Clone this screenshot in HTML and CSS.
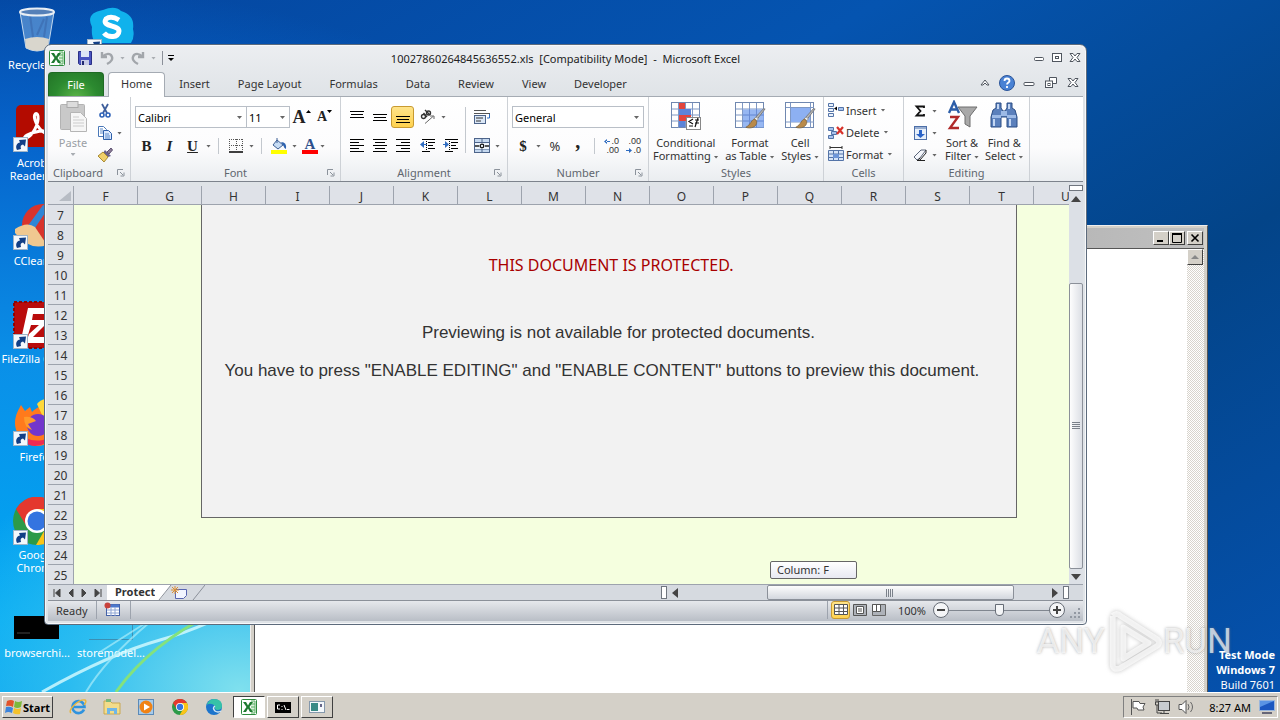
FILE: index.html
```html
<!DOCTYPE html>
<html lang="en">
<head>
  <meta charset="UTF-8">
  <meta name="viewport" content="width=device-width, initial-scale=1.0">
  <title>10027860264845636552.xls - Microsoft Excel</title>
  <link rel="stylesheet" href="styles.css">
</head>

<body>
  <!-- shared icons -->
  <svg class="defs" width="0" height="0">
    <symbol id="shortcut" viewBox="0 0 15 15">
      <rect x=".5" y=".5" width="14" height="14" fill="#f4f8fc" stroke="#9fb4c8"/>
      <path d="M4 13C2 9 4 6 7 5.500L6 3l7-.5-1 7-2-2C8 8 7 9 8 12z" fill="#123f86"/>
    </symbol>
    <symbol id="launcher" viewBox="0 0 8 8">
      <path d="M.5 6V.5H6M3 3l3 3M7 3.500V7H3.500" fill="none" stroke="#8b929b"/>
    </symbol>
    <symbol id="excel" viewBox="0 0 16 16">
      <rect x=".5" y=".5" width="15" height="15" rx="1" fill="#fff" stroke="#2c8a3c"/>
      <path d="M10 2h4v12h-4M10 5h4M10 8h4M10 11h4" fill="#d9f0d9" stroke="#5db069"/>
      <path d="M2 3h3l2 3.500L9 3h3L8.500 8 12 13H9L7 9.500 5 13H2l3.500-5z" fill="#1e7a30"/>
    </symbol>
    <symbol id="grid-big" viewBox="0 0 32 32">
      <rect x="1.500" y="2.500" width="28" height="25" fill="#fff" stroke="#7088b0"/>
      <path d="M2 9h28M2 15h28M2 21h28M8.500 3v25M15.500 3v25M22.500 3v25" stroke="#7f98c4"/>
    </symbol>
    <symbol id="brush" viewBox="0 0 24 24">
      <path d="M23 1L13 14l-2-2L21 1z" fill="#b8b8b8" stroke="#777"/>
      <path d="M13 14l-2-2 2-2 3 2z" fill="#eee" stroke="#888" stroke-width=".6"/>
      <path d="M12 12c-4 0-4 6-10 9 5 2 12 0 12-6z" fill="#b98a4a" stroke="#6d5a3c" stroke-width=".7"/>
    </symbol>
    <symbol id="chrome" viewBox="0 0 48 48">
      <circle cx="24" cy="24" r="24" fill="#2c9a48"/>
      <path d="M3 12A24 24 0 0 1 45 12L24 14 14 30z" fill="#e4382e"/>
      <path d="M45 12A24 24 0 0 1 23 48L34 29 24 12z" fill="#fbc417"/>
      <circle cx="24" cy="24" r="12" fill="#fff"/>
      <circle cx="24" cy="24" r="9.500" fill="#3474e0"/>
    </symbol>
  </svg>

  <svg class="wallpaper" viewBox="0 0 250 100" preserveAspectRatio="none">
    <path d="M42 100Q110 62 160 48T250 8" fill="none" stroke="#d7fbff" stroke-width="3" opacity=".8"/>
    <path d="M116 100Q150 52 215 20" fill="none" stroke="#84e27c" stroke-width="3"/>
    <path d="M86 100Q105 68 150 30M100 60L155 25" fill="none" stroke="#a9ecfa" stroke-width="2" opacity=".7"/>
  </svg>

  <main class="desktop">
    <a class="shortcut" href="#">
      <svg class="shortcut-icon" viewBox="0 0 48 48">
        <path d="M7 5l6 36q11 6 22 0l6-36z" fill="#7fb0e4" fill-opacity=".55" stroke="#c4d9ee"/>
        <path d="M12 32l1 9q11 6 22 0l1-9q-12-4-24 0z" fill="#d9d6cd"/>
        <path d="M17 8l3 22M31 12L24 28M34 10l-3 20" stroke="#3f73b8" stroke-width="2"/>
        <ellipse cx="24" cy="5" rx="17" ry="3.500" fill="#5580b8" stroke="#e8eef4" stroke-width="2"/>
      </svg>
      <span>Recycle Bin</span>
    </a>
    <a class="shortcut" href="#">
      <svg class="shortcut-icon" viewBox="0 0 48 48">
        <rect x="3" width="45" height="42" rx="5" fill="#b30b00"/>
        <path d="M12 33C20 32 26 18 25 11c-1-5-5-2-3 4 3 9 10 16 18 14 4-2-10-4-17-2-7 1-13 5-11 6z" fill="none" stroke="#fff" stroke-width="3"/>
        <use href="#shortcut" x="0" y="32" width="15" height="15"/>
      </svg>
      <span>Acrobat Reader DC</span>
    </a>
    <a class="shortcut" href="#">
      <svg class="shortcut-icon" viewBox="0 0 48 48">
        <circle cx="30" cy="22" r="21" fill="#d8342c"/>
        <path d="M14 24L30 2l6 2-16 24z" fill="#2f86d6"/>
        <path d="M2 26q12-8 20-2l12 18q-18 6-32-12z" fill="#f0c890"/>
        <use href="#shortcut" x="0" y="32" width="15" height="15"/>
      </svg>
      <span>CCleaner</span>
    </a>
    <a class="shortcut" href="#">
      <svg class="shortcut-icon" viewBox="0 0 48 48">
        <rect x="1" y="1" width="46" height="46" fill="#b90c0c" stroke="#8c0505" stroke-width="2" stroke-dasharray="3 2"/>
        <path d="M15 7h30l-2 6H20l-1 6h18L20 36h22v6H13l3-9 10-9h-8l-3 10H9z" fill="#fff"/>
        <use href="#shortcut" x="0" y="33" width="15" height="15"/>
      </svg>
      <span class="one-line">FileZilla Client</span>
    </a>
    <a class="shortcut" href="#">
      <svg class="shortcut-icon" viewBox="0 0 48 48">
        <path d="M2 24C2 16 6 10 8 6l4 6 5-4 2 5c4-5 10-4 12-12 10 6 16 16 15 27-2 12-12 19-22 19S2 37 2 24z" fill="#ff7a1c"/>
        <path d="M24 5q3-4 8-5 14 12 14 26L30 18z" fill="#ffd83a"/>
        <path d="M4 32q10 12 26 9l12-7q-8 13-20 13T4 32z" fill="#ee2a52"/>
        <circle cx="25" cy="26" r="11" fill="#7236cc"/>
        <path d="M11 18q8-1 12 4l-8 3 4 6q-8-2-8-13z" fill="#ff9a2a"/>
        <use href="#shortcut" x="0" y="32" width="15" height="15"/>
      </svg>
      <span>Firefox</span>
    </a>
    <a class="shortcut" href="#">
      <svg class="shortcut-icon" viewBox="0 0 48 48">
        <use href="#chrome" width="48" height="48"/>
        <use href="#shortcut" x="0" y="33" width="15" height="15"/>
      </svg>
      <span>Google Chrome</span>
    </a>
    <a class="shortcut" href="#">
      <svg class="shortcut-icon" viewBox="0 0 48 48">
        <rect x="1" y="21" width="45" height="23" fill="#000"/>
        <path d="M4 38h13" stroke="#444"/>
      </svg>
      <span>browserchi...</span>
    </a>
    <a class="shortcut" href="#" aria-label="Skype">
      <svg class="shortcut-icon" viewBox="0 0 48 48">
        <path d="M16 3Q28-2 34 4q14 4 12 18 2 8-2 14H8Q4 30 5 20-2 6 16 3z" fill="#10b2ec"/>
        <path d="M32 13q-8-5-13-1c-5 8 13 6 13 12 0 7-11 7-15 2" fill="none" stroke="#fff" stroke-width="5"/>
        <use href="#shortcut" x="0" y="32" width="15" height="15"/>
      </svg>
    </a>
    <a class="shortcut last-row" href="#">
      <svg class="shortcut-icon" viewBox="0 0 48 48">
        <path d="M2 44.500h43.500V20" fill="none" stroke="#3a8fb4"/>
      </svg>
      <span>storemodel...</span>
    </a>
  </main>

  <p class="build-info"><b>Test Mode</b><b>Windows 7</b><span>Build 7601</span></p>

  <!-- text window at the back -->
  <section class="classic-window" aria-label="Text window">
    <header class="classic-title">
      <button class="classic-btn" aria-label="Minimize"><svg viewBox="0 0 12 10"><path d="M2 8h6" stroke="#000" stroke-width="2"/></svg></button>
      <button class="classic-btn" aria-label="Maximize"><svg viewBox="0 0 12 10"><path d="M2 1h8M1.500 1v8.500h9V1" fill="none" stroke="#000"/><path d="M1 1h10" stroke="#000" stroke-width="2"/></svg></button>
      <button class="classic-btn close" aria-label="Close"><svg viewBox="0 0 12 10"><path d="M2.500 1.500l7 7M9.500 1.500l-7 7" stroke="#000" stroke-width="1.600"/></svg></button>
    </header>
    <div class="classic-body">
      <div class="classic-page"></div>
      <div class="classic-scroll">
        <button class="classic-btn" aria-label="Scroll up"><svg viewBox="0 0 12 10"><path d="M2 7h8L6 3z" fill="#888"/></svg></button>
      </div>
    </div>
  </section>

  <section class="excel" aria-label="Microsoft Excel">
    <header class="titlebar">
      <div class="quick-access">
        <svg class="i16" viewBox="0 0 16 16"><use href="#excel"/></svg>
        <i class="bar"></i>
        <button class="tool" aria-label="Save"><svg class="i16" viewBox="0 0 16 16"><path d="M1.500 1.500h13v13h-12l-1-1z" fill="#4a54c0" stroke="#2a2f86"/><rect x="4" y="1" width="8" height="6" fill="#dfe6f6"/><rect x="4" y="10" width="8" height="5" fill="#c7cbe6"/><rect x="5" y="11" width="2" height="4" fill="#222a70"/></svg></button>
        <button class="tool" aria-label="Undo"><svg class="i16" viewBox="0 0 16 16"><path d="M3 2v5h5M3 7q5-5 9-2c3 4 0 7-4 9" fill="none" stroke="#a2a6ab" stroke-width="2.400"/></svg></button>
        <i class="arrow pale"></i>
        <button class="tool" aria-label="Redo"><svg class="i16" viewBox="0 0 16 16"><path d="M13 2v5H8M13 7Q8 2 4 5c-3 4 0 7 4 9" fill="none" stroke="#a2a6ab" stroke-width="2.400"/></svg></button>
        <i class="arrow pale"></i>
        <i class="bar"></i>
        <button class="tool narrow" aria-label="Customize Quick Access Toolbar"><svg viewBox="0 0 8 8" width="8" height="8"><path d="M1 1.500h6" stroke="#000"/><path d="M1 4h6L4 7z"/></svg></button>
      </div>
      <h1>10027860264845636552.xls&nbsp; [Compatibility Mode]&nbsp; -&nbsp; Microsoft Excel</h1>
      <div class="window-buttons">
        <button class="tool" aria-label="Minimize"><svg class="wb" viewBox="0 0 12 12"><rect x="1.500" y="5.500" width="9" height="3" rx="1"/></svg></button>
        <button class="tool" aria-label="Restore"><svg class="wb" viewBox="0 0 12 12"><rect x="1.500" y="1.500" width="9" height="8"/><rect x="4.500" y="4.500" width="3" height="2"/></svg></button>
        <button class="tool" aria-label="Close"><svg class="wb" viewBox="0 0 12 12"><path d="M1 1.500h3l2 2.500 2-2.500h3L8 5.500l3 4H8L6 7 4 9.500H1l3-4z"/></svg></button>
      </div>
    </header>

    <nav class="tabs">
      <button class="tab file">File</button>
      <button class="tab active">Home</button>
      <button class="tab">Insert</button>
      <button class="tab">Page Layout</button>
      <button class="tab">Formulas</button>
      <button class="tab">Data</button>
      <button class="tab">Review</button>
      <button class="tab">View</button>
      <button class="tab">Developer</button>
      <div class="tab-tools">
        <button class="tool" aria-label="Minimize the Ribbon"><svg class="wb" viewBox="0 0 12 12"><path d="M2 8l4-5 4 5H8L6 6 4 8z"/></svg></button>
        <button class="tool" aria-label="Help"><svg class="i16" viewBox="0 0 16 16"><circle cx="8" cy="8" r="7.500" fill="#4a82d4" stroke="#2a5499"/><path d="M5.500 6q0-2.500 2.500-2.500T10.500 6C10.500 7.500 8 7.500 8 9.500M8 11v2" fill="none" stroke="#fff" stroke-width="1.800"/></svg></button>
        <button class="tool" aria-label="Minimize workbook"><svg class="wb" viewBox="0 0 12 12"><rect x="1" y="5.500" width="10" height="3" rx="1"/></svg></button>
        <button class="tool" aria-label="Restore workbook"><svg class="wb" viewBox="0 0 12 12"><path d="M4.500 4V.5h7v6H8"/><rect x=".5" y="4" width="7" height="6.500"/><rect x="3" y="6.500" width="2" height="2"/></svg></button>
        <button class="tool" aria-label="Close workbook"><svg class="wb" viewBox="0 0 12 12"><path d="M1 1.500h3l2 2.500 2-2.500h3L8 5.500l3 4H8L6 7 4 9.500H1l3-4z"/></svg></button>
      </div>
    </nav>

    <div class="ribbon">
      <section class="group clipboard">
        <div class="group-body">
          <button class="big paste"><svg class="i32" viewBox="0 0 32 32"><rect x="3.500" y="4.500" width="24" height="25" rx="1" fill="#c9c9c9" stroke="#b3b3b3"/><rect x="10" y="1.500" width="11" height="6" fill="#dcdcdc" stroke="#aaa"/><path d="M13.500 12.500h10l6 6v13h-16z" fill="#f6f6f6" stroke="#b5b5b5"/><path d="M16 17h6M16 20h11M16 23h11M16 26h11" stroke="#ccc"/></svg><span>Paste</span><i class="arrow pale"></i></button>
          <div class="stack">
            <button class="tool" aria-label="Cut"><svg class="i16" viewBox="0 0 16 16"><path d="M5 1l5 9M11 1L6 10" stroke="#3f5f9c" stroke-width="1.800"/><circle cx="5" cy="12" r="2" fill="none" stroke="#2e62b8" stroke-width="1.600"/><circle cx="11" cy="12" r="2" fill="none" stroke="#2e62b8" stroke-width="1.600"/></svg></button>
            <button class="tool" aria-label="Copy"><svg class="i16" viewBox="0 0 16 16"><path d="M1.500 1.500h5l3 3v7h-8z" fill="#fff" stroke="#4a78b8"/><path d="M6.500 5.500h5l3 3v6h-8z" fill="#dceaff" stroke="#2e5fa8"/><path d="M3 4h3M3 6h3M3 8h3M8 9h4M8 11h5M8 13h5" stroke="#5c8ac8"/></svg><i class="arrow"></i></button>
            <button class="tool" aria-label="Format Painter"><svg class="i16" viewBox="0 0 16 16"><path d="M10 5l4-4 1.500 2L12 7z" fill="#8a7a94" stroke="#5d5070"/><path d="M8 3l6 6-3 1-5-4z" fill="#69608c"/><path d="M6 5l5 5-4 5-6-6z" fill="#f0cf6a" stroke="#a88a32"/></svg></button>
          </div>
        </div>
        <footer>Clipboard<svg class="launcher"><use href="#launcher"/></svg></footer>
      </section>

      <section class="group font">
        <div class="group-body rows">
          <div class="row">
            <select class="combo font-name" aria-label="Font"><option>Calibri</option></select>
            <select class="combo font-size" aria-label="Font Size"><option>11</option></select>
            <button class="tool serif grow" aria-label="Grow Font">A<svg viewBox="0 0 5 3" width="5" height="3"><path d="M0 3h5L2.500 0z"/></svg></button>
            <button class="tool serif shrink" aria-label="Shrink Font">A<svg viewBox="0 0 5 3" width="5" height="3"><path d="M0 0h5L2.500 3z"/></svg></button>
          </div>
          <div class="row">
            <button class="tool serif">B</button>
            <button class="tool serif italic">I</button>
            <button class="tool serif underline">U</button><i class="arrow"></i>
            <i class="bar"></i>
            <button class="tool" aria-label="Borders"><svg class="i16" viewBox="0 0 16 16"><path d="M1.500 1v12M8.500 1v12M14.500 1v12M1 1.500h14M1 7.500h14" stroke="#555" stroke-dasharray="1 1"/><path d="M1 14h14" stroke="#000" stroke-width="1.500"/></svg></button><i class="arrow"></i>
            <i class="bar"></i>
            <button class="tool" aria-label="Fill Color"><svg class="i16" viewBox="0 0 16 16"><path d="M6 2l6 5-5 4-5-4z" fill="#c6dcf4" stroke="#3d5f94"/><path d="M6 5V0" stroke="#3d5f94"/><path d="M10 4q6 0 5 7-2-1-3-4z" fill="#2c62b0"/><rect y="12" width="16" height="4" fill="#ff0"/></svg></button><i class="arrow"></i>
            <button class="tool serif fontcolor" aria-label="Font Color">A</button><i class="arrow"></i>
          </div>
        </div>
        <footer>Font<svg class="launcher"><use href="#launcher"/></svg></footer>
      </section>

      <section class="group alignment">
        <div class="group-body">
          <div class="rows">
            <div class="row">
              <button class="tool" aria-label="Top Align"><svg class="ln" viewBox="0 0 16 16"><path d="M1 2.500h14M2 5.500h12M1 8.500h14"/></svg></button>
              <button class="tool" aria-label="Middle Align"><svg class="ln" viewBox="0 0 16 16"><path d="M1 5.500h14M2 8.500h12M1 11.500h14"/></svg></button>
              <button class="tool pressed" aria-label="Bottom Align"><svg class="ln" viewBox="0 0 16 16"><path d="M1 7.500h14M2 10.500h12M1 13.500h14"/></svg></button>
              <button class="tool" aria-label="Orientation"><svg class="i16" viewBox="0 0 16 16"><circle cx="3.500" cy="7.500" r="2" fill="none" stroke="#333" stroke-width="1.400"/><path d="M3.500 4L7 8M5 1l5 5" stroke="#333" stroke-width="1.400"/><circle cx="8.500" cy="4" r="2" fill="none" stroke="#333" stroke-width="1.400"/><path d="M5 14.500l8-7M10 7h4v3" fill="none" stroke="#666"/></svg></button><i class="arrow"></i>
            </div>
            <div class="row">
              <button class="tool" aria-label="Align Left"><svg class="ln" viewBox="0 0 16 16"><path d="M1 1.500h14M1 4.500h9M1 7.500h14M1 10.500h9M1 13.500h14"/></svg></button>
              <button class="tool" aria-label="Center"><svg class="ln" viewBox="0 0 16 16"><path d="M1 1.500h14M3 4.500h10M1 7.500h14M3 10.500h10M1 13.500h14"/></svg></button>
              <button class="tool" aria-label="Align Right"><svg class="ln" viewBox="0 0 16 16"><path d="M1 1.500h14M6 4.500h9M1 7.500h14M6 10.500h9M1 13.500h14"/></svg></button>
              <button class="tool" aria-label="Decrease Indent"><svg class="ln" viewBox="0 0 16 16"><path d="M2 1.500h13M8 4.500h7M8 7.500h5M8 10.500h7M2 13.500h8"/><path d="M6.500 1v14" stroke-dasharray="1 1"/><path d="M4 3L0 6.500 4 10z" fill="#2f6cc0" stroke="none"/><path d="M3 6.500h4" stroke="#2f6cc0"/></svg></button>
              <button class="tool" aria-label="Increase Indent"><svg class="ln" viewBox="0 0 16 16"><path d="M2 1.500h13M8 4.500h7M8 7.500h5M8 10.500h7M2 13.500h8"/><path d="M6.500 1v14" stroke-dasharray="1 1"/><path d="M2 3l4 3.500L2 10z" fill="#2f6cc0" stroke="none"/><path d="M0 6.500h3" stroke="#2f6cc0"/></svg></button>
            </div>
          </div>
          <i class="bar tall"></i>
          <div class="rows">
            <div class="row"><button class="tool" aria-label="Wrap Text"><svg class="i16" viewBox="0 0 16 16"><path d="M0 1.500h12M0 4.500h16" stroke="#555"/><rect x=".5" y="6.500" width="11" height="8" fill="#dbe7f6" stroke="#4d648a"/><path d="M2 9h7M2 12h5" stroke="#333"/><path d="M15.500 5v4H13" fill="none" stroke="#2f6cc0"/></svg></button></div>
            <div class="row"><button class="tool" aria-label="Merge and Center"><svg class="i16" viewBox="0 0 16 16"><rect x=".5" y=".5" width="15" height="14" fill="#c5d8ef" stroke="#4d648a"/><path d="M8 1v3M8 11v4M1 4.500h14M1 11h14" stroke="#4d648a"/><rect x="1" y="5" width="14" height="6" fill="#eef5fd"/><path d="M1 8h4M11 8h4" stroke="#222" stroke-width="1.500"/><circle cx="8" cy="8" r="1.800" fill="none" stroke="#111" stroke-width="1.300"/></svg></button><i class="arrow"></i></div>
          </div>
        </div>
        <footer>Alignment<svg class="launcher"><use href="#launcher"/></svg></footer>
      </section>

      <section class="group number">
        <div class="group-body rows">
          <select class="combo" aria-label="Number Format"><option>General</option></select>
          <div class="row">
            <button class="tool serif">$</button><i class="arrow"></i>
            <button class="tool percent">%</button>
            <button class="tool serif comma">,</button>
            <i class="bar"></i>
            <button class="tool decimals" aria-label="Increase Decimal"><span><svg viewBox="0 0 6 5" width="6" height="5"><path d="M3 0L0 2.500 3 5zM2 2h4v1H2z"/></svg>.0</span><span>.00</span></button>
            <button class="tool decimals" aria-label="Decrease Decimal"><span>.00</span><span><svg viewBox="0 0 6 5" width="6" height="5"><path d="M3 0l3 2.500L3 5zM0 2h4v1H0z"/></svg>.0</span></button>
          </div>
        </div>
        <footer>Number<svg class="launcher"><use href="#launcher"/></svg></footer>
      </section>

      <section class="group styles">
        <div class="group-body">
          <button class="big"><svg class="i32" viewBox="0 0 32 32"><use href="#grid-big"/><path d="M9 3h6v6H9zM9 15h12v6H9z" fill="#e2453c"/><path d="M9 9h12v6H9zM9 21h6v6H9z" fill="#5c84d8"/><rect x="16.500" y="17.500" width="14" height="12" fill="#fff" stroke="#888"/><path d="M23 19l-4 2.500 4 2.500M19 26h4M25 20h4M25 23h4M28 18l-3 9" fill="none" stroke="#111" stroke-width="1.200"/></svg><span>Conditional<br>Formatting <i class="arrow"></i></span></button>
          <button class="big"><svg class="i32" viewBox="0 0 32 32"><use href="#grid-big"/><path d="M9 9.500h21v18H9z" fill="#85aaf0" opacity=".85"/><path d="M9 15h21M9 21h21M15.500 9v19M22.500 9v19" stroke="#6a8cd4"/><use href="#brush" x="10" y="8" width="22" height="22"/></svg><span>Format<br>as Table <i class="arrow"></i></span></button>
          <button class="big"><svg class="i32" viewBox="0 0 32 32"><rect x="1.500" y="2.500" width="28" height="25" fill="#fff" stroke="#7088b0"/><path d="M2 7.500h28M2 22h28M6.500 3v25M26.500 3v25" stroke="#7f98c4"/><path d="M7 8h19v14H7z" fill="#8db0f2"/><use href="#brush" x="10" y="8" width="22" height="22"/></svg><span>Cell<br>Styles <i class="arrow"></i></span></button>
        </div>
        <footer>Styles</footer>
      </section>

      <section class="group cells">
        <div class="group-body stack">
          <button class="tool"><svg class="i16" viewBox="0 0 16 16"><path d="M.5 1.500h5v3h-5zM.5 6.500h5v3h-5zM.5 11.500h5v3h-5z" fill="#eaf2fb" stroke="#5474a8"/><path d="M10.500 5.500h5v3h-5z" fill="#a9c4ee" stroke="#5474a8"/><path d="M6 6.500l3-2v4z"/></svg>Insert <i class="arrow"></i></button>
          <button class="tool"><svg class="i16" viewBox="0 0 16 16"><path d="M.5 3.500h5v3h-5zM.5 11.500h5v3h-5zM3.500 7.500h5v3h-5z" fill="#a9c4ee" stroke="#5474a8"/><path d="M9 3l6 7M15 3L9 10" stroke="#d8322a" stroke-width="2.200"/></svg>Delete <i class="arrow"></i></button>
          <button class="tool"><svg class="i16" viewBox="0 0 16 16"><path d="M2 1.500h12M2 0v3M14 0v3" stroke="#333"/><path d="M.5 4.500h15v10H.5z" fill="#d7e5f8" stroke="#5474a8"/><path d="M1 8h14M1 11.500h14M5.500 5v10M10.500 5v10" stroke="#5474a8"/><rect x="5" y="8" width="6" height="4" fill="#6f97d8"/></svg>Format <i class="arrow"></i></button>
        </div>
        <footer>Cells</footer>
      </section>

      <section class="group editing">
        <div class="group-body">
          <div class="stack">
            <button class="tool" aria-label="AutoSum"><svg class="i16" viewBox="0 0 16 16"><path d="M12 5V3.500H4.500l4 4.500-4 4.500H12V11" fill="none" stroke="#111" stroke-width="1.800"/></svg><i class="arrow"></i></button>
            <button class="tool" aria-label="Fill"><svg class="i16" viewBox="0 0 16 16"><rect x="2.500" y="1.500" width="12" height="13" fill="#e6effa" stroke="#4d6fa8"/><path d="M3 3h11" stroke="#4d6fa8"/><path d="M7 5h3v4h3l-4.500 4L4 9h3z" fill="#2a63c8"/></svg><i class="arrow"></i></button>
            <button class="tool" aria-label="Clear"><svg class="i16" viewBox="0 0 16 16"><path d="M2 10l7-7h5l-6 8-3 2z" fill="#f4f6fb" stroke="#5a6478"/><path d="M5 13.500h8M8 11l-2 2.500M14 3v3l-6 7" fill="none" stroke="#222"/></svg><i class="arrow"></i></button>
          </div>
          <button class="big"><svg class="i32" viewBox="0 0 32 32"><path d="M12 7h19l-7 9v11l-5-3v-8z" fill="#a9a9a9" stroke="#6e6e6e"/><path d="M3 13l5-11 5 11M5 9.500h6" fill="none" stroke="#2d5ea8" stroke-width="2.400"/><path d="M4 17h8L4 28h9" fill="none" stroke="#b02a2a" stroke-width="2.400"/></svg><span>Sort &amp;<br>Filter <i class="arrow"></i></span></button>
          <button class="big"><svg class="i32" viewBox="0 0 32 32"><path d="M8 3h5v5l2 3h2l2-3V3h5v5l3 2 2 7v10H19V17h-6v10H3V17l2-7 3-2z" fill="#5b80bc" stroke="#2b4d84"/><path d="M4 15h9v3H4zM19 15h9v3h-9zM13 11h6v5h-6z" fill="#9dbae6"/><path d="M6 19v7M22 19v7M10 4v5M21 4v5" stroke="#c4d7f3" stroke-width="2"/></svg><span>Find &amp;<br>Select <i class="arrow"></i></span></button>
        </div>
        <footer>Editing</footer>
      </section>
    </div>

    <div class="workbook">
      <div class="sheet">
        <table class="cells-table">
          <thead>
            <tr><th class="corner" aria-label="Select all"><svg viewBox="0 0 12 10" width="12" height="10"><path d="M12 0v10H0z" fill="#b7bcc4"/></svg></th><th>F</th><th>G</th><th>H</th><th>I</th><th>J</th><th>K</th><th>L</th><th>M</th><th>N</th><th>O</th><th>P</th><th>Q</th><th>R</th><th>S</th><th>T</th><th>U</th></tr>
          </thead>
          <tbody>
            <tr><th>7</th><td colspan="16"></td></tr>
            <tr><th>8</th><td colspan="16"></td></tr>
            <tr><th>9</th><td colspan="16"></td></tr>
            <tr><th>10</th><td colspan="16"></td></tr>
            <tr><th>11</th><td colspan="16"></td></tr>
            <tr><th>12</th><td colspan="16"></td></tr>
            <tr><th>13</th><td colspan="16"></td></tr>
            <tr><th>14</th><td colspan="16"></td></tr>
            <tr><th>15</th><td colspan="16"></td></tr>
            <tr><th>16</th><td colspan="16"></td></tr>
            <tr><th>17</th><td colspan="16"></td></tr>
            <tr><th>18</th><td colspan="16"></td></tr>
            <tr><th>19</th><td colspan="16"></td></tr>
            <tr><th>20</th><td colspan="16"></td></tr>
            <tr><th>21</th><td colspan="16"></td></tr>
            <tr><th>22</th><td colspan="16"></td></tr>
            <tr><th>23</th><td colspan="16"></td></tr>
            <tr><th>24</th><td colspan="16"></td></tr>
            <tr><th>25</th><td colspan="16"></td></tr>
          </tbody>
        </table>
        <div class="notice">
          <h2>&nbsp;THIS DOCUMENT IS PROTECTED.</h2>
          <p>&nbsp;&nbsp;&nbsp;&nbsp;Previewing is not available for protected documents.</p>
          <p>You have to press "ENABLE EDITING" and "ENABLE CONTENT" buttons to preview this document.&nbsp;&nbsp;&nbsp;</p>
        </div>
        <div class="scroll-tip">Column: F</div>
      </div>
      <div class="v-scroll">
        <i class="v-split"></i>
        <button class="tool" aria-label="Scroll up"><svg viewBox="0 0 10 6" width="10" height="6"><path d="M0 6h10L5 0z"/></svg></button>
        <div class="v-track"><div class="v-thumb"><i></i></div></div>
        <button class="tool" aria-label="Scroll down"><svg viewBox="0 0 10 6" width="10" height="6"><path d="M0 0h10L5 6z"/></svg></button>
      </div>
    </div>

    <div class="sheet-bar">
      <div class="sheet-nav">
        <button class="tool" aria-label="First sheet"><svg viewBox="0 0 8 8"><path d="M1 0v8M7 0v8L2.500 4z"/></svg></button>
        <button class="tool" aria-label="Previous sheet"><svg viewBox="0 0 8 8"><path d="M6 0v8L2 4z"/></svg></button>
        <button class="tool" aria-label="Next sheet"><svg viewBox="0 0 8 8"><path d="M2 0v8l4-4z"/></svg></button>
        <button class="tool" aria-label="Last sheet"><svg viewBox="0 0 8 8"><path d="M1 0v8l4.500-4zM7 0v8"/></svg></button>
      </div>
      <button class="sheet-tab">Protect</button>
      <button class="tool new-sheet" aria-label="Insert Worksheet"><svg viewBox="0 0 50 16" width="50" height="16"><path d="M0 0h16L4 16H0z" fill="#fff"/><path d="M16 0L4 15M50 0L38 15" stroke="#8b9099" fill="none"/><path d="M20.500 4.500h11v6l-3 3h-8z" fill="#f2f5ff" stroke="#5866b0"/><path d="M20 1v8M16 5h8M17 2l6 6M23 2l-6 6" stroke="#dc9032"/></svg></button>
      <div class="h-scroll">
        <i class="h-split"></i>
        <button class="tool" aria-label="Scroll left"><svg viewBox="0 0 6 10" width="6" height="10"><path d="M6 0v10L0 5z"/></svg></button>
        <div class="h-track"><div class="h-thumb"><i></i></div></div>
        <button class="tool" aria-label="Scroll right"><svg viewBox="0 0 6 10" width="6" height="10"><path d="M0 0v10l6-5z"/></svg></button>
        <i class="h-split"></i>
      </div>
    </div>

    <footer class="status">
      <span class="ready">Ready</span>
      <button class="tool macro" aria-label="Record Macro"><svg class="i16" viewBox="0 0 16 16"><rect x="2.500" y="2.500" width="13" height="11" fill="#fff" stroke="#4462a8"/><path d="M3 4h12" stroke="#4c78cc" stroke-width="3"/><path d="M3 8h12M3 11h12M7 5v9M11 5v9" stroke="#8fa6d4"/><circle cx="3.500" cy="3.500" r="3" fill="#c8423c"/></svg></button>
      <div class="views">
        <button class="tool pressed" aria-label="Normal"><svg viewBox="0 0 14 12" width="14" height="12"><path d="M.5 .5h13v10H.5zM1 4h12M1 7.500h12M5 1v10M9.500 1v10" fill="#fff" stroke="#555"/></svg></button>
        <button class="tool" aria-label="Page Layout"><svg viewBox="0 0 14 12" width="14" height="12"><path d="M.5 .5h13v11H.5z" fill="#aeb2b9" stroke="#555"/><path d="M3.500 2.500h7v7h-7zM5 5h4M5 7h4" fill="#fff" stroke="#555"/></svg></button>
        <button class="tool" aria-label="Page Break Preview"><svg viewBox="0 0 14 12" width="14" height="12"><path d="M.5 .5h13v11H.5z" fill="#aeb2b9" stroke="#666"/><path d="M.5 .5h4v7h-4zM4.500 .5h4v7h-4z" fill="#fff" stroke="#555"/></svg></button>
      </div>
      <button class="tool zoom-text">100%</button>
      <button class="tool round" aria-label="Zoom Out"><svg class="i16" viewBox="0 0 16 16"><circle cx="8" cy="8" r="7.500" fill="#f4f5f7" stroke="#666c76"/><path d="M4 8h8" stroke="#444" stroke-width="2"/></svg></button>
      <input class="zoom" type="range" min="0" max="100" value="50" aria-label="Zoom">
      <button class="tool round" aria-label="Zoom In"><svg class="i16" viewBox="0 0 16 16"><circle cx="8" cy="8" r="7.500" fill="#f4f5f7" stroke="#666c76"/><path d="M4 8h8M8 4v8" stroke="#444" stroke-width="2"/></svg></button>
      <svg class="grip" viewBox="0 0 12 12"><path d="M9 1h2v2H9zM5 5h2v2H5zM9 5h2v2H9zM1 9h2v2H1zM5 9h2v2H5zM9 9h2v2H9z"/></svg>
    </footer>
  </section>

  <div class="watermark">
    <span>ANY</span>
    <svg viewBox="0 0 60 66"><path d="M8 6v52M8 6q4-4 8 0l38 24q4 4 0 7L16 60q-8 3-8-4M19 18l26 16-26 16z" fill="none" stroke-width="6" stroke-linejoin="round"/></svg>
    <span>RUN</span>
  </div>

  <footer class="taskbar">
    <button class="start"><svg viewBox="0 0 18 16" width="18" height="16"><path d="M2 2q4-2 7 0L8 8Q5 6 1 7z" fill="#e2532b"/><path d="M10 2q3 2 7 0l-1 6q-4 2-7 0z" fill="#7cb83c"/><path d="M1 8q4-1 7 1l-1 5q-4-2-7 0z" fill="#3c84dc"/><path d="M9 9q4 2 7 0l-1 6q-4 1-7-1z" fill="#f4c22c"/></svg>Start</button>
    <div class="launch">
      <button class="tool" aria-label="Internet Explorer"><svg class="i18" viewBox="0 0 18 18"><path d="M15 11.500A6 6 0 1 1 15.500 9H5" fill="none" stroke="#2f93de" stroke-width="2.600"/><path d="M2 15C-2 12 10 1 16 2c2 1 0 4-1 5" fill="none" stroke="#e8b63a" stroke-width="1.400"/></svg></button>
      <button class="tool" aria-label="Explorer"><svg class="i18" viewBox="0 0 18 18"><path d="M1 3h6l2 2h8v11H1z" fill="#f2dc8a" stroke="#c9a850"/><path d="M3 1h5v3H3z" fill="#7ab87a"/><path d="M4 10h10v6h-3v-3H7v3H4z" fill="#6fb6e6"/></svg></button>
      <button class="tool" aria-label="Media Player"><svg class="i18" viewBox="0 0 18 18"><rect x="1.500" y="1.500" width="15" height="15" fill="#a7cbea" stroke="#5b8ab8"/><circle cx="9" cy="9" r="6.500" fill="#f08214"/><path d="M7 5.500v7l6-3.500z" fill="#fff"/></svg></button>
      <button class="tool" aria-label="Chrome"><svg class="i18" viewBox="0 0 18 18"><use href="#chrome" x="1" y="1" width="16" height="16"/></svg></button>
      <button class="tool" aria-label="Edge"><svg class="i18" viewBox="0 0 18 18"><circle cx="9" cy="9" r="8" fill="#1c74cc"/><path d="M1.500 7Q4 1 9 1q8 0 8 7 0 4-5 4-3-1-2-4Q6 4 1.500 7z" fill="#36c2a8"/><path d="M10 8q-3 2 0 5 3 2 6 0" fill="none" stroke="#d4e8f4" stroke-width="1.500"/></svg></button>
    </div>
    <button class="task active" aria-label="Excel"><svg class="i16" viewBox="0 0 16 16"><use href="#excel"/></svg></button>
    <button class="task" aria-label="Command Prompt"><svg class="i16" viewBox="0 0 16 16"><rect y="3" width="16" height="11" fill="#000"/><path d="M5 6H2.500v4H5M7 7v1M7 10v1M9 6l2 5M12 10.500h2.500" fill="none" stroke="#fff"/></svg></button>
    <button class="task" aria-label="Application"><svg class="i16" viewBox="0 0 16 16"><rect x=".5" y="2.500" width="15" height="11" fill="#f4f8fc" stroke="#8498ac"/><rect x="2" y="4" width="7" height="8" fill="#3a8a86"/><path d="M12 5v3" stroke="#668" stroke-width="2"/></svg></button>
    <div class="tray">
      <svg class="i18" viewBox="0 0 18 18"><path d="M2.500 1v16M4 3.500h6l1 2h5l-2 3.500 1 3H9l-1-2H4z" fill="#fff" stroke="#555"/></svg>
      <svg class="i18" viewBox="0 0 18 18"><rect x="5.500" y="3.500" width="11" height="9" fill="#c8ccd0" stroke="#444"/><path d="M7 15.500h9M11 13v2M2.500 4v3h3V4zM3 4V1M5 4V1M4 7v8h5" fill="none" stroke="#444"/></svg>
      <svg class="i18" viewBox="0 0 18 18"><path d="M2 6.500h3l4-4v13l-4-4H2z" fill="#fff" stroke="#555"/><path d="M11 6q2 3 0 6M13.500 4q4 5 0 10" fill="none" stroke="#666"/></svg>
      <time>8:27 AM</time>
      <svg class="i16" viewBox="0 0 16 16"><rect x=".5" y="1.500" width="15" height="10" fill="#1c58c0" stroke="#9ab6dc"/><path d="M1 2h14L1 8z" fill="#5a94e4"/><path d="M3 14h10" stroke="#667" stroke-width="2"/></svg>
    </div>
  </footer>
</body>
</html>
```
FILE: styles.css
```css
*, *::before, *::after {
  box-sizing: border-box;
}

:root {
  --line: #8b9099;
  --face: #d4d0c8;
  --ui: "Noto Sans", "Open Sans", sans-serif;
}

body {
  margin: 0;
  height: 100vh;
  overflow: hidden;
  position: relative;
  font-family: var(--ui);
  font-size: 11px;
  line-height: 13px;
  color: #333;
  background:
    radial-gradient(ellipse 340px 240px at 240px 690px, #7fe0ee 0%, rgba(60, 200, 240, 0.7) 50%, transparent 100%),
    radial-gradient(ellipse 900px 640px at 0 620px, #00a8f4 0%, #0a90e8 40%, #0664cc 75%, transparent 100%),
    linear-gradient(150deg, #0446a0 0%, #0554b0 35%, #034488 65%, #0552b0 100%);
}

button, select, input {
  font: inherit;
  color: inherit;
  margin: 0;
}

svg {
  display: block;
  flex: none;
}

p, h1, h2 {
  margin: 0;
  font-size: inherit;
  font-weight: normal;
}

.defs {
  position: absolute;
}

.i16 { width: 16px; height: 16px; }
.i18 { width: 18px; height: 18px; }
.i32 { width: 32px; height: 32px; }

.wallpaper {
  position: absolute;
  left: 0;
  bottom: 28px;
  width: 250px;
  height: 100px;
}

/* desktop */
.desktop {
  display: grid;
  grid-auto-flow: column;
  grid-template-rows: repeat(7, 98px);
  grid-auto-columns: 74px;
  padding-top: 7px;
  height: 100%;
}

.shortcut {
  display: flex;
  flex-direction: column;
  align-items: center;
  gap: 3px;
  color: #fff;
  text-align: center;
  text-decoration: none;
}

.shortcut span {
  max-width: 72px;
}

.shortcut .one-line {
  white-space: nowrap;
}

.shortcut-icon {
  width: 48px;
  height: 48px;
}

.last-row {
  grid-row: 7;
}

.build-info {
  position: absolute;
  right: 5px;
  bottom: 28px;
  display: flex;
  flex-direction: column;
  text-align: right;
  line-height: 15px;
  color: #fff;
  z-index: 3;
}

/* classic window */
.classic-window {
  position: absolute;
  left: 250px;
  right: 72px;
  top: 225px;
  bottom: 28px;
  display: flex;
  flex-direction: column;
  padding: 2px 3px 0;
  background: var(--face);
  border: 1px solid #eee;
  border-right-color: #555;
  border-bottom: 0;
}

.classic-title {
  display: flex;
  justify-content: flex-end;
  align-items: center;
  height: 20px;
  padding-right: 1px;
  background: linear-gradient(90deg, #808080, #c0c0c0);
}

.classic-btn {
  display: flex;
  align-items: center;
  justify-content: center;
  width: 16px;
  height: 14px;
  padding: 0;
  background: var(--face);
  border: 1px solid;
  border-color: #fff #404040 #404040 #fff;
}

.classic-btn svg {
  width: 12px;
  height: 10px;
}

.classic-btn.close {
  margin-left: 2px;
}

.classic-body {
  flex: 1;
  display: flex;
  border-top: 1px solid #555;
  border-left: 1px solid #555;
}

.classic-page {
  flex: 1;
  background: #fff;
}

.classic-scroll {
  width: 17px;
  background: repeating-conic-gradient(#fff 0 25%, #d8d4cd 0 50%) 0 0 / 2px 2px;
}

.classic-scroll .classic-btn {
  height: 16px;
}

/* excel window */
.excel {
  position: absolute;
  left: 44px;
  right: 193px;
  top: 44px;
  bottom: 95px;
  display: flex;
  flex-direction: column;
  padding: 2px 3px 3px;
  background: linear-gradient(#eceef1, #dfe3e7 52px, #dfe3e7);
  border: 1px solid #5d6b7c;
  border-radius: 7px 7px 4px 4px;
  box-shadow: inset 0 0 0 1px #f7f8fa;
}

.tool {
  display: flex;
  align-items: center;
  justify-content: center;
  padding: 0;
  border: 0;
  background: none;
  white-space: nowrap;
}

.arrow {
  flex: none;
  display: inline-block;
  width: 5px;
  height: 3px;
  margin: 0 2px;
  vertical-align: middle;
  background: #666;
  clip-path: polygon(0 0, 100% 0, 50% 100%);
}

.arrow.pale {
  background: #a9adb2;
}

.bar {
  flex: none;
  width: 1px;
  height: 16px;
  margin: 0 5px;
  background: #c3c8ce;
}

.bar.tall {
  height: 46px;
}

.titlebar {
  display: grid;
  grid-template-columns: 1fr auto 1fr;
  align-items: center;
  height: 25px;
  padding-bottom: 3px;
}

.titlebar h1 {
  color: #222;
}

.quick-access {
  display: flex;
  align-items: center;
  padding-left: 1px;
}

.quick-access .bar {
  margin: 0 4px;
  height: 14px;
  background: #8b9099;
}

.quick-access .tool {
  width: 22px;
}

.quick-access .narrow {
  width: 8px;
}

.window-buttons {
  display: flex;
  justify-content: flex-end;
  padding-right: 2px;
  gap: 6px;
}

.wb {
  width: 12px;
  height: 12px;
  fill: #fff;
  stroke: #50565f;
}

.tabs {
  display: flex;
  height: 25px;
  margin-bottom: -1px;
  z-index: 1;
}

.tab {
  padding: 0 13px 3px;
  border: 1px solid transparent;
  border-bottom: 0;
  border-radius: 4px 4px 0 0;
  background: none;
  white-space: nowrap;
}

.tab.file {
  width: 56px;
  margin: 0 4px 1px 0;
  padding-bottom: 1px;
  color: #fff;
  border-color: #1f6a24;
  background: radial-gradient(ellipse at 50% 110%, #5cb548, #2c8a30 55%, #237527);
}

.tab.active {
  background: #fff;
  border-color: #a5abb3;
  padding: 0 12px 3px;
}

.tab-tools {
  display: flex;
  gap: 6px;
  margin-left: auto;
  padding: 0 2px 3px 0;
}

.tab-tools .tool {
  width: 16px;
}

/* ribbon */
.ribbon {
  display: flex;
  height: 86px;
  border-top: 1px solid #a5abb3;
  border-bottom: 1px solid #7d838c;
  background: linear-gradient(#fff, #fcfcfd 60%, #eaedf0);
}

.group {
  display: flex;
  flex-direction: column;
  border-right: 1px solid #cdd1d6;
}

.group-body {
  flex: 1;
  display: flex;
  min-height: 0;
  padding: 3px 4px 0;
}

.group footer {
  flex: none;
  position: relative;
  height: 17px;
  padding-top: 2px;
  text-align: center;
  color: #60666e;
}

.launcher {
  position: absolute;
  right: 5px;
  top: 5px;
  width: 8px;
  height: 8px;
}

.clipboard { width: 83px; }
.font { width: 210px; }
.alignment { width: 167px; }
.number { width: 141px; }
.styles { width: 175px; }
.cells { width: 80px; }
.editing { width: 126px; }

.clipboard footer {
  padding-right: 22px;
}

.rows {
  display: flex;
  flex-direction: column;
  gap: 7px;
}

.group-body.rows,
.alignment .rows {
  padding-top: 9px;
}

.alignment .group-body {
  padding-top: 0;
}

.row {
  display: flex;
  flex: none;
  align-items: center;
  height: 22px;
}

.row .tool {
  width: 23px;
  height: 22px;
}

.big {
  display: flex;
  flex-direction: column;
  align-items: center;
  gap: 4px;
  padding: 0;
  border: 0;
  background: none;
  text-align: center;
  white-space: nowrap;
}

.big .arrow {
  margin: 0;
}

.paste {
  width: 42px;
  color: #9a9fa5;
}

.stack {
  display: flex;
  flex-direction: column;
  align-items: flex-start;
}

.stack .tool {
  flex: none;
  height: 22px;
  gap: 2px;
}

.clipboard .stack {
  padding-left: 3px;
}

.combo {
  flex: none;
  appearance: none;
  height: 22px;
  padding: 0 2px;
  border: 1px solid #b9bfc7;
  border-radius: 0;
  color: #000;
  background: #fff url("data:image/svg+xml,%3Csvg xmlns='http://www.w3.org/2000/svg' width='5' height='3'%3E%3Cpath d='M0 0h5L2.500 3z' fill='%23666'/%3E%3C/svg%3E") no-repeat right 4px center;
}

.font-name { width: 112px; }
.font-size { width: 44px; margin-left: -1px; }

.serif {
  font-family: "Liberation Serif", serif;
  font-weight: bold;
  font-size: 15px;
  color: #222;
}

.grow, .shrink {
  align-items: flex-start;
}

.grow { font-size: 18px; line-height: 22px; }
.shrink { font-size: 14px; line-height: 22px; }

.grow svg, .shrink svg {
  margin-top: 4px;
}

.italic { font-style: italic; }
.underline { text-decoration: underline; }

.font .fontcolor {
  width: 16px;
  height: 16px;
  margin-left: 3px;
  line-height: 12px;
  align-items: flex-start;
  border-bottom: 4px solid #f00;
  color: #2d4f8c;
}

.pressed {
  background: linear-gradient(#ffe48a, #ffd24f);
  border: 1px solid #c89a30;
  border-radius: 3px;
}

.ln {
  width: 16px;
  height: 16px;
  stroke: #000;
  fill: none;
}

.alignment .tool:nth-child(4) {
  margin-left: 2px;
}

.alignment .tall {
  margin: 10px 4px 0 3px;
}

.number .percent {
  width: 25px;
  font-size: 13px;
}

.number .comma {
  font-size: 20px;
  line-height: 12px;
  align-items: flex-start;
}

.number .decimals {
  flex-direction: column;
  align-items: flex-end;
  padding-right: 3px;
  font-family: "Liberation Sans", Arial, sans-serif;
  font-size: 9px;
  line-height: 9px;
}

.decimals span {
  display: flex;
  align-items: center;
  gap: 1px;
  height: 9px;
}

.decimals svg {
  fill: #2f6cc0;
}

.styles .group-body {
  justify-content: space-between;
}

.group-body.stack {
  padding-top: 2px;
}

.editing .stack {
  padding-left: 4px;
}

.editing .group-body {
  padding-left: 4px;
  gap: 6px;
}

/* workbook */
.workbook {
  flex: 1;
  display: flex;
  min-height: 0;
}

.sheet {
  flex: 1;
  position: relative;
  margin-top: 4px;
  overflow: hidden;
  background: #f5ffdf;
}

.cells-table {
  width: 1050px;
  table-layout: fixed;
  border-collapse: separate;
  border-spacing: 0;
}

.cells-table th {
  height: 20px;
  padding: 2px 0 0;
  font-weight: normal;
  font-size: 12px;
  background: #dfe2e8;
  border-right: 1px solid #9da3ad;
  border-bottom: 1px solid #9da3ad;
}

.cells-table thead th {
  height: 19px;
}

.cells-table td {
  padding: 0;
}

.cells-table .corner {
  width: 26px;
}

.corner svg {
  margin-left: 11px;
}

/* drawing that covers H7:T22 */
.notice {
  position: absolute;
  left: 153px;
  top: 19px;
  width: 816px;
  height: 313px;
  padding-top: 49px;
  border: 1px solid #666;
  border-top: 0;
  background: #f2f2f2;
  text-align: center;
  white-space: nowrap;
}

.notice h2 {
  margin-bottom: 47px;
  font-size: 16px;
  line-height: 22px;
  color: #a80000;
}

.notice p {
  margin-bottom: 18px;
  font-family: "Liberation Sans", Arial, sans-serif;
  font-size: 17px;
  line-height: 20px;
}

.scroll-tip {
  position: absolute;
  right: 212px;
  bottom: 5px;
  width: 87px;
  height: 18px;
  padding: 1px 6px;
  border: 1px solid #666;
  border-radius: 2px;
  background: linear-gradient(#fff, #e8e9f2);
}

.v-scroll {
  display: flex;
  flex-direction: column;
  align-items: center;
  width: 14px;
  background: #dce0e6;
}

.v-scroll svg, .h-scroll svg {
  fill: #444;
}

.v-split {
  width: 14px;
  height: 6px;
  margin: 3px 0 1px;
  border: 1px solid #70767f;
  background: #fff;
}

.v-scroll .tool {
  width: 14px;
  height: 14px;
}

.v-track {
  flex: 1;
  width: 100%;
  padding-top: 77px;
}

.v-thumb, .h-thumb {
  display: flex;
  align-items: center;
  justify-content: center;
  border: 1px solid #8b9099;
  border-radius: 2px;
  background: linear-gradient(90deg, #fdfdfd, #dcdfe5);
}

.v-thumb {
  height: 100%;
  max-height: 286px;
}

.v-thumb i, .h-thumb i {
  width: 8px;
  height: 8px;
  background: repeating-linear-gradient(#7b818a 0 1px, transparent 1px 2px);
}

.sheet-bar {
  display: flex;
  height: 16px;
  padding-right: 14px;
  border-top: 1px solid #9da3ad;
  background: #d6dae0;
}

.sheet-nav {
  display: flex;
  align-items: center;
  width: 59px;
  justify-content: space-evenly;
}

.sheet-nav svg {
  width: 8px;
  height: 8px;
  stroke: #444;
  fill: #444;
}

.sheet-tab {
  padding: 0 0 2px 8px;
  border: 0;
  background: #fff;
  font-weight: bold;
  line-height: 13px;
}

.h-scroll {
  flex: none;
  display: flex;
  align-items: center;
  width: 40%;
  margin-left: auto;
}

.h-split {
  width: 6px;
  height: 13px;
  border: 1px solid #70767f;
  background: #fff;
}

.h-scroll .tool {
  width: 17px;
}

.h-track {
  flex: 1;
  height: 15px;
  padding: 0 32px 0 83px;
}

.h-thumb {
  height: 15px;
  background: linear-gradient(#fdfdfd, #d3d7de);
}

.h-thumb i {
  background: repeating-linear-gradient(90deg, #7b818a 0 1px, transparent 1px 2px);
}

.status {
  display: flex;
  align-items: center;
  height: 21px;
  padding: 0 0 2px 8px;
  border-top: 1px solid var(--line);
  background: linear-gradient(#e6e8ec, #b9bec6);
}

.ready {
  width: 40px;
}

.macro {
  width: 35px;
  height: 18px;
  padding-right: 3px;
  border: 1px solid #9da3ad;
  border-width: 0 1px;
}

.views {
  display: flex;
  margin-left: auto;
  padding: 0 3px;
  border-left: 1px solid #9da3ad;
}

.views .tool {
  width: 19px;
  height: 18px;
}

.zoom-text {
  width: 42px;
}

.zoom {
  appearance: none;
  width: 100px;
  height: 14px;
  background: linear-gradient(#80868f, #80868f) no-repeat center / 100% 1px;
}

.zoom::-webkit-slider-thumb {
  appearance: none;
  width: 9px;
  height: 12px;
  border: 1px solid #666c76;
  border-radius: 1px 1px 5px 5px;
  background: #f4f5f7;
}

.grip {
  width: 12px;
  height: 12px;
  margin: 6px 2px 0 4px;
  fill: #9298a2;
}

/* watermark */
.watermark {
  position: absolute;
  right: 48px;
  bottom: 45px;
  display: flex;
  align-items: center;
  font-family: Roboto, "Liberation Sans", sans-serif;
  font-size: 35px;
  line-height: 66px;
  color: rgba(255, 255, 255, 0.7);
  text-shadow: 0 0 3px rgba(120, 120, 120, 0.6);
  pointer-events: none;
}

.watermark svg {
  width: 58px;
  height: 64px;
  stroke: rgba(255, 255, 255, 0.7);
  filter: drop-shadow(0 0 2px rgba(120, 120, 120, 0.6));
}

/* taskbar */
.taskbar {
  position: absolute;
  left: 0;
  right: 0;
  bottom: 0;
  display: flex;
  align-items: center;
  height: 28px;
  padding: 1px 2px 0;
  gap: 2px;
  background: var(--face);
  border-top: 1px solid #fff;
}

.start, .task {
  display: flex;
  align-items: center;
  justify-content: center;
  height: 22px;
  padding: 0 2px;
  border: 1px solid;
  border-color: #fff #404040 #404040 #fff;
  background: var(--face);
}

.start {
  font-weight: bold;
  color: #000;
}

.task {
  width: 32px;
}

.task.active {
  background: #fff;
  border-color: #404040 #fff #fff #404040;
}

.launch {
  display: flex;
  gap: 16px;
  margin: 0 8px 0 14px;
}

.tray {
  display: flex;
  align-items: center;
  gap: 6px;
  height: 22px;
  margin-left: auto;
  padding: 0 2px 0 5px;
  border: 1px solid;
  border-color: #808080 #fff #fff #808080;
  color: #000;
}

.tray time {
  margin: 0 2px 0 8px;
}
```
